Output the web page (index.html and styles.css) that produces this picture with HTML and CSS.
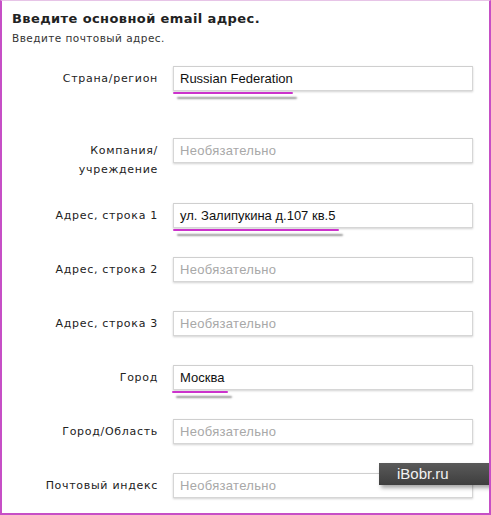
FILE: index.html
```html
<!DOCTYPE html>
<html lang="ru">
<head>
<meta charset="utf-8">
<link rel="stylesheet" href="styles.css">
</head>
<body>
<div class="frame">
  <header class="head">
    <h1 class="title">Введите основной email адрес.</h1>
    <p class="subtitle">Введите почтовый адрес.</p>
  </header>
  <div class="form">
    <div class="row row-first">
      <label class="label">Страна/регион</label>
      <div class="field">
        <div class="input value">Russian Federation</div>
        <span class="mark mark-country"></span>
      </div>
    </div>
    <div class="row row-two">
      <label class="label">Компания/<br>учреждение</label>
      <div class="field"><div class="input ph">Необязательно</div></div>
    </div>
    <div class="row">
      <label class="label">Адрес, строка 1</label>
      <div class="field">
        <div class="input value">ул. Залипукина д.107 кв.5</div>
        <span class="mark mark-street"></span>
      </div>
    </div>
    <div class="row">
      <label class="label">Адрес, строка 2</label>
      <div class="field"><div class="input ph">Необязательно</div></div>
    </div>
    <div class="row">
      <label class="label">Адрес, строка 3</label>
      <div class="field"><div class="input ph">Необязательно</div></div>
    </div>
    <div class="row">
      <label class="label">Город</label>
      <div class="field">
        <div class="input value">Москва</div>
        <span class="mark mark-city"></span>
      </div>
    </div>
    <div class="row">
      <label class="label">Город/Область</label>
      <div class="field"><div class="input ph">Необязательно</div></div>
    </div>
    <div class="row">
      <label class="label">Почтовый индекс</label>
      <div class="field"><div class="input ph">Необязательно</div></div>
    </div>
  </div>
  <div class="badge">iBobr.ru</div>
</div>
</body>
</html>
```

FILE: styles.css
```css
html, body {
  margin: 0;
  padding: 0;
  background: #fff;
}
.frame {
  position: relative;
  box-sizing: border-box;
  width: 491px;
  height: 515px;
  border-left: 2px solid #c64fc6;
  border-right: 2px solid #c64fc6;
  border-bottom: 2px solid #c64fc6;
  border-top: 1px solid #e7c4e7;
  overflow: hidden;
  font-family: "DejaVu Sans", Verdana, sans-serif;
  color: #333;
}
.head {
  padding: 10px 0 0 10px;
}
.title {
  margin: 0;
  font-size: 13px;
  font-weight: bold;
  color: #222;
  line-height: 16px;
  letter-spacing: 0.4px;
}
.subtitle {
  margin: 4px 0 0;
  font-size: 10.5px;
  line-height: 14px;
  color: #333;
  letter-spacing: 0.45px;
}
.form {
  display: flex;
  flex-direction: column;
  gap: 29px;
  margin-top: 21px;
}
.row {
  display: grid;
  grid-template-columns: 156px 300px;
  column-gap: 15px;
  align-items: start;
}
.row-first {
  margin-bottom: 18px;
}
.row-two {
  margin-bottom: -5px;
}
.label {
  text-align: right;
  font-size: 11px;
  line-height: 19px;
  padding-top: 3px;
  letter-spacing: 0.7px;
  color: #222;
}
.field {
  position: relative;
}
.input {
  box-sizing: border-box;
  height: 25px;
  border: 1px solid #d6d6d6;
  border-top-color: #cfcfcf;
  box-shadow: 0 1px 2px rgba(0,0,0,0.18);
  padding: 0 6px;
  font-family: "Liberation Sans", Arial, sans-serif;
  font-size: 13px;
  line-height: 23px;
  background: #fff;
}
.value {
  color: #111;
}
.ph {
  color: #a8a8a8;
  letter-spacing: 0.3px;
}
.mark {
  position: absolute;
  left: 0;
  top: 26px;
  height: 2px;
  background: #cc33cc;
  border-radius: 1px;
  box-shadow: 4px 5px 2px rgba(0,0,0,0.4);
}
.mark-country { width: 120px; }
.mark-street { width: 166px; }
.mark-city { width: 56px; left: -1px; }
.badge {
  position: absolute;
  left: 377px;
  top: 462px;
  width: 114px;
  height: 22px;
  background: linear-gradient(#5a5a5a, #3e3e3e);
  box-shadow: 2px 3px 4px rgba(0,0,0,0.35);
  color: #f2f2f2;
  font-family: "Liberation Sans", Arial, sans-serif;
  font-size: 15px;
  line-height: 22px;
  padding-left: 18px;
  box-sizing: border-box;
}
```
